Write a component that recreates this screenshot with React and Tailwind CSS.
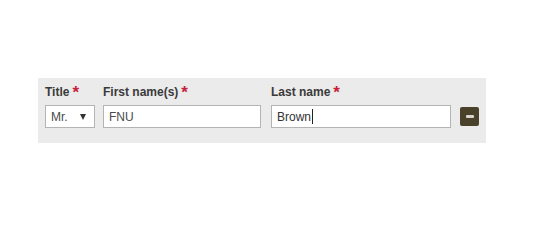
import React from "react";

const Label = ({ children }) => (
    <div className="flex items-start h-[16px] text-[12px] leading-[16px] font-bold text-[#3a3a3a]">
        {children}
        <span className="ml-[3px] text-[17px] leading-[18px] font-bold text-[#c8213c]">*</span>
    </div>
);

const Field = ({ width, value, cursor, dark }) => (
    <div
        className={`h-[23px] ${width} border border-[#b4b4b4] bg-white flex items-center pl-[5px] text-[12px] ${dark ? "text-[#333]" : "text-[#4a4a4a]"}`}
    >
        {value}
        {cursor && <span className="ml-[1px] w-px h-[15px] bg-[#222]"></span>}
    </div>
);

export default function App() {
    return (
        <div className="w-[550px] h-[230px] bg-white pt-[78px] pl-[38px]" style={{ fontFamily: '"Liberation Sans", Arial, sans-serif' }}>
            <div className="w-[448px] h-[65px] bg-[#ebebeb] pt-[6px] px-[7px] flex items-start">
                <div className="flex flex-col gap-[5px] w-[50px]">
                    <Label>Title</Label>
                    <div className="h-[23px] w-[50px] border border-[#b4b4b4] bg-white flex items-center justify-between pl-[5px] pr-[8px] text-[12px] text-[#4a4a4a]">
                        Mr.
                        <span className="w-0 h-0 mt-[1px] border-l-[3px] border-r-[3px] border-t-[6px] border-l-transparent border-r-transparent border-t-[#333]"></span>
                    </div>
                </div>
                <div className="flex flex-col gap-[5px] ml-[8px]">
                    <Label>First name(s)</Label>
                    <Field width="w-[158px]" value="FNU" />
                </div>
                <div className="flex flex-col gap-[5px] ml-[10px]">
                    <Label>Last name</Label>
                    <Field width="w-[180px]" value="Brown" cursor dark />
                </div>
                <div className="ml-[9px] mt-[21px] h-[23px] flex items-center">
                    <button className="w-[19px] h-[19px] rounded-[2px] bg-[#4a412a] flex items-center justify-center">
                        <span className="w-[8px] h-[3px] rounded-[1px] bg-[#d8d6cc]"></span>
                    </button>
                </div>
            </div>
        </div>
    );
}
